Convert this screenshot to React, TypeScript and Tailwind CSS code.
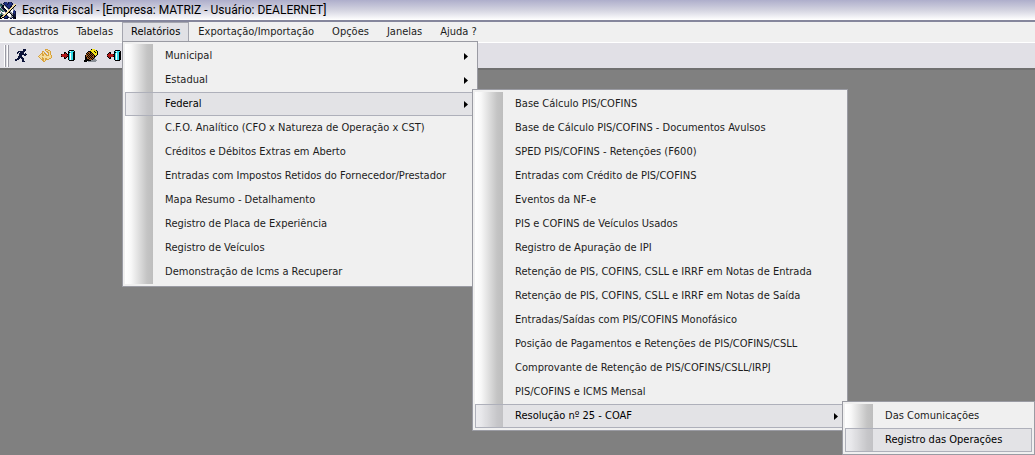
import { clsx } from 'clsx';

type MenuEntry = {
  label: string;
  active?: boolean;
  width?: string;
  children?: MenuEntry[];
};

const coaf: MenuEntry[] = [
  { label: 'Das Comunicações' },
  { label: 'Registro das Operações', active: true },
];

const federal: MenuEntry[] = [
  { label: 'Base Cálculo PIS/COFINS' },
  { label: 'Base de Cálculo PIS/COFINS - Documentos Avulsos' },
  { label: 'SPED PIS/COFINS - Retenções (F600)' },
  { label: 'Entradas com Crédito de PIS/COFINS' },
  { label: 'Eventos da NF-e' },
  { label: 'PIS e COFINS de Veículos Usados' },
  { label: 'Registro de Apuração de IPI' },
  { label: 'Retenção de PIS, COFINS, CSLL e IRRF em Notas de Entrada' },
  { label: 'Retenção de PIS, COFINS, CSLL e IRRF em Notas de Saída' },
  { label: 'Entradas/Saídas com PIS/COFINS Monofásico' },
  { label: 'Posição de Pagamentos e Retenções de PIS/COFINS/CSLL' },
  { label: 'Comprovante de Retenção de PIS/COFINS/CSLL/IRPJ' },
  { label: 'PIS/COFINS e ICMS Mensal' },
  { label: 'Resolução nº 25 - COAF', active: true, width: 'w-[193px]', children: coaf },
];

const relatorios: MenuEntry[] = [
  { label: 'Municipal', children: [] },
  { label: 'Estadual', children: [] },
  { label: 'Federal', active: true, width: 'w-[376px]', children: federal },
  { label: 'C.F.O. Analítico (CFO x Natureza de Operação x CST)' },
  { label: 'Créditos e Débitos Extras em Aberto' },
  { label: 'Entradas com Impostos Retidos do Fornecedor/Prestador' },
  { label: 'Mapa Resumo - Detalhamento' },
  { label: 'Registro de Placa de Experiência' },
  { label: 'Registro de Veículos' },
  { label: 'Demonstração de Icms a Recuperar' },
];

const menuBar: MenuEntry[] = [
  { label: 'Cadastros' },
  { label: 'Tabelas' },
  { label: 'Relatórios', active: true, width: 'w-[356px]', children: relatorios },
  { label: 'Exportação/Importação' },
  { label: 'Opções' },
  { label: 'Janelas' },
  { label: 'Ajuda ?' },
];

// One letter per pixel colour, a dot is transparent
const palette: Record<string, string> = {
  k: '#000000',
  n: '#0b1238',
  b: '#1f2f80',
  w: '#ffffff',
  g: '#8a8f96',
  o: '#d9a23c',
  l: '#f3dc9c',
  r: '#b01818',
  c: '#35dbe8',
  y: '#f2e21c',
  m: '#a0581c',
  t: '#2c6a62',
};

const PixelIcon = ({ rows }: { rows: string[] }) => (
  <svg
    width={rows[0].length}
    height={rows.length}
    viewBox={`0 0 ${rows[0].length} ${rows.length}`}
    shapeRendering="crispEdges"
    aria-hidden="true"
  >
    {rows.flatMap((row, y) =>
      [...row].map((pixel, x) =>
        pixel === '.' ? null : (
          <rect key={`${x}-${y}`} x={x} y={y} width="1" height="1" fill={palette[pixel]} />
        )
      )
    )}
  </svg>
);

const appIcon = [
  '....nbbgnbbn....',
  'gg.nbbbbnbbbn...',
  'tnggnbbnbbbbn.ll',
  'ttnkgnbbbbbn.llk',
  'gtknwgnbbbnnllk.',
  '.nnkwwgnbbnllk..',
  'tgnnkwwgnnllkg..',
  'ttgnnkwwgllkwg..',
  'gttgnnkwllkwwgb.',
  'gwttgnnllkgwwbbn',
  '.gwwwgllkkggwbbn',
  '.tgwwllkwwkggnbn',
  'ttggllkwwwwkgnnn',
  'tkkllkngwwwgknnn',
  'knllkbbngwwggknn',
  'klkkbbbnngggnnkk',
  'kk..nnnn..nn.nnk',
];

const toolbarIcons = [
  {
    title: 'Executar',
    rows: [
      '........nnn...',
      '........nnn...',
      '...nnnnnnn....',
      '..nn.nnnn.....',
      '..n.nnnnn.n...',
      '....nnnnnnnn..',
      '....nnn..nn...',
      '...nnnn.......',
      '...nnnnn......',
      '..nnn.nnn.....',
      'nnnn...nn.....',
      'nn.....nn.....',
      '.......nnn....',
      '..............',
    ],
  },
  {
    title: 'Desfazer',
    rows: [
      '.......ooo....',
      '.......olloo..',
      '....oo..oollo.',
      '....olo..oolo.',
      '...ooloo..olo.',
      '..olooloo.olo.',
      '.olloollooollo',
      'ollllllllllllo',
      '.ollollllllllo',
      '..olooloolloo.',
      '...oooloooo...',
      '....oolo......',
      '.....oo.......',
      '..............',
    ],
  },
  {
    title: 'Entrar',
    rows: [
      '..............',
      '........kkkkk.',
      '.......kcwccck',
      '...kk..kkccckk',
      '...krk.kcwcckk',
      'krrrrrkkcwcckk',
      'rrrrrrrkcwcckk',
      'krrrrrkkcwcckk',
      '...krk.kcwcckk',
      '...kk..kcwcckk',
      '.......kcwcckk',
      '........kkkkk.',
      '..............',
      '..............',
    ],
  },
  {
    title: 'Editar',
    rows: [
      '.......kyyy...',
      '......yyyyyyk.',
      '....kkkyyykyyk',
      '...kmmkkyyykyk',
      '..kmkmkmkyyyyk',
      '..mkmkmkmkyyyk',
      '.kmmkmkmkmkyk.',
      '.kmkmkmkmmkk..',
      '.kkmkmkmkmk...',
      '.kkmmkmkmkg...',
      '.kkkkmmmkggg..',
      'kkkkkkkgggggg.',
      'kkk.gggggggg..',
      '..............',
    ],
  },
  {
    title: 'Sair',
    rows: [
      '..............',
      '........kkkkk.',
      '.......kcwccck',
      '..kk...kkccckk',
      '.krk...kcwcckk',
      'krrrrrkkcwcckk',
      'rrrrrrrkcwcckk',
      'krrrrrkkcwcckk',
      '.krk...kcwcckk',
      '..kk...kcwcckk',
      '.......kcwcckk',
      '........kkkkk.',
      '..............',
      '..............',
    ],
  },
];

const Menu = ({ items, width }: { items: MenuEntry[]; width?: string }) => (
  <div className={clsx('border border-[#9a9ba3] bg-[#f0f0f0] p-[2px]', width)}>
    <ul
      role="menu"
      className="bg-[linear-gradient(to_right,#ffffff_0px,#f8f8f8_6px,#c4c4c4_22px,#bdbdbd_28px,#f0f0f0_28px)]"
    >
      {items.map((item) => (
        <li key={item.label} role="none" className="relative">
          <button
            role="menuitem"
            className={clsx(
              'flex h-6 w-full items-center justify-between border pr-1.5 pl-[39px] text-left whitespace-nowrap',
              item.active
                ? 'border-[#aeb0ba] bg-[#cbccd4]/35 text-black'
                : 'border-transparent text-[#1c1c1c]'
            )}
          >
            {item.label}
            {item.children && (
              <svg width="4" height="7" viewBox="0 0 4 7" aria-hidden="true">
                <path d="M0 0L4 3.5L0 7Z" fill="#000" />
              </svg>
            )}
          </button>
          {item.active && item.children && (
            <div className="absolute -top-[3px] left-full z-10 -ml-[3px]">
              <Menu items={item.children} width={item.width} />
            </div>
          )}
        </li>
      ))}
    </ul>
  </div>
);

const App = () => {
  return (
    <div className="min-h-screen bg-[#808080] font-['DejaVu_Sans_Condensed','DejaVu_Sans',sans-serif] text-[11px]">
      <header className="flex h-[22px] items-center gap-[6px] border-b-2 border-[#85869c] bg-linear-to-b from-[#aeaecb] via-[#d3d3e0] to-white">
        <PixelIcon rows={appIcon} />
        <h1 className="font-[Roboto,sans-serif] text-xs text-black">
          Escrita Fiscal - [Empresa: MATRIZ - Usuário: DEALERNET]
        </h1>
      </header>

      <nav className="flex h-5 bg-[#f0f0f0] text-[#1c1c1c]">
        {menuBar.map((item) => (
          <div key={item.label} className="relative">
            <button
              className={clsx(
                'h-5 border px-2 whitespace-nowrap',
                item.active ? 'border-[#a4a5ae] bg-[#e1e1e5] text-black' : 'border-transparent'
              )}
            >
              {item.label}
            </button>
            {item.active && item.children && (
              <div className="absolute top-full left-0 z-10 -mt-px">
                <Menu items={item.children} width={item.width} />
              </div>
            )}
          </div>
        ))}
      </nav>

      <div className="flex h-7 items-center gap-[9px] border-t border-b-2 border-t-white border-b-[#707070] bg-[#e1e0e6] pl-1">
        <div className="mr-[-3px] flex h-[22px] gap-px">
          <span className="w-[2px] border-r border-[#9a9aa4] bg-white" />
          <span className="w-[2px] border-r border-[#9a9aa4] bg-white" />
        </div>
        {toolbarIcons.map((icon) => (
          <button key={icon.title} aria-label={icon.title}>
            <PixelIcon rows={icon.rows} />
          </button>
        ))}
      </div>
    </div>
  );
};

export default App;
